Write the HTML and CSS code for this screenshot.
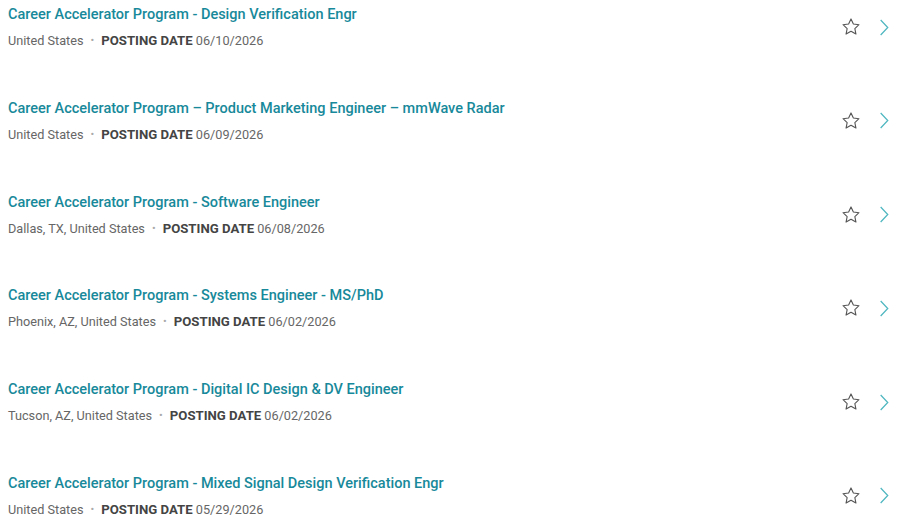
FILE: index.html
```html
<!DOCTYPE html>
<html lang="en">
<head>
    <meta charset="UTF-8">
    <meta name="viewport" content="width=device-width, initial-scale=1.0">
    <title>Jobs</title>
    <link rel="stylesheet" href="styles.css">
</head>
<body>
    <ul class="job-list">
        <li class="job">
            <div class="job-info">
                <a class="job-title" href="#">Career Accelerator Program - Design Verification Engr</a>
                <div class="job-meta"><span class="location">United States</span><span class="dot">•</span><span class="label">POSTING DATE</span> 06/10/2026</div>
            </div>
            <div class="job-actions">
                <svg class="star" viewBox="0 0 24 24"><path d="M12 3.2l2.6 5.6 6.1.7-4.5 4.2 1.2 6-5.4-3-5.4 3 1.2-6-4.5-4.2 6.1-.7z"/></svg>
                <svg class="chevron" viewBox="0 0 12 20"><path d="M2 1l8.5 9L2 19"/></svg>
            </div>
        </li>
        <li class="job">
            <div class="job-info">
                <a class="job-title" href="#">Career Accelerator Program – Product Marketing Engineer – mmWave Radar</a>
                <div class="job-meta"><span class="location">United States</span><span class="dot">•</span><span class="label">POSTING DATE</span> 06/09/2026</div>
            </div>
            <div class="job-actions">
                <svg class="star" viewBox="0 0 24 24"><path d="M12 3.2l2.6 5.6 6.1.7-4.5 4.2 1.2 6-5.4-3-5.4 3 1.2-6-4.5-4.2 6.1-.7z"/></svg>
                <svg class="chevron" viewBox="0 0 12 20"><path d="M2 1l8.5 9L2 19"/></svg>
            </div>
        </li>
        <li class="job">
            <div class="job-info">
                <a class="job-title" href="#">Career Accelerator Program - Software Engineer</a>
                <div class="job-meta"><span class="location">Dallas, TX, United States</span><span class="dot">•</span><span class="label">POSTING DATE</span> 06/08/2026</div>
            </div>
            <div class="job-actions">
                <svg class="star" viewBox="0 0 24 24"><path d="M12 3.2l2.6 5.6 6.1.7-4.5 4.2 1.2 6-5.4-3-5.4 3 1.2-6-4.5-4.2 6.1-.7z"/></svg>
                <svg class="chevron" viewBox="0 0 12 20"><path d="M2 1l8.5 9L2 19"/></svg>
            </div>
        </li>
        <li class="job">
            <div class="job-info">
                <a class="job-title" href="#">Career Accelerator Program - Systems Engineer - MS/PhD</a>
                <div class="job-meta"><span class="location">Phoenix, AZ, United States</span><span class="dot">•</span><span class="label">POSTING DATE</span> 06/02/2026</div>
            </div>
            <div class="job-actions">
                <svg class="star" viewBox="0 0 24 24"><path d="M12 3.2l2.6 5.6 6.1.7-4.5 4.2 1.2 6-5.4-3-5.4 3 1.2-6-4.5-4.2 6.1-.7z"/></svg>
                <svg class="chevron" viewBox="0 0 12 20"><path d="M2 1l8.5 9L2 19"/></svg>
            </div>
        </li>
        <li class="job">
            <div class="job-info">
                <a class="job-title" href="#">Career Accelerator Program - Digital IC Design &amp; DV Engineer</a>
                <div class="job-meta"><span class="location">Tucson, AZ, United States</span><span class="dot">•</span><span class="label">POSTING DATE</span> 06/02/2026</div>
            </div>
            <div class="job-actions">
                <svg class="star" viewBox="0 0 24 24"><path d="M12 3.2l2.6 5.6 6.1.7-4.5 4.2 1.2 6-5.4-3-5.4 3 1.2-6-4.5-4.2 6.1-.7z"/></svg>
                <svg class="chevron" viewBox="0 0 12 20"><path d="M2 1l8.5 9L2 19"/></svg>
            </div>
        </li>
        <li class="job">
            <div class="job-info">
                <a class="job-title" href="#">Career Accelerator Program - Mixed Signal Design Verification Engr</a>
                <div class="job-meta"><span class="location">United States</span><span class="dot">•</span><span class="label">POSTING DATE</span> 05/29/2026</div>
            </div>
            <div class="job-actions">
                <svg class="star" viewBox="0 0 24 24"><path d="M12 3.2l2.6 5.6 6.1.7-4.5 4.2 1.2 6-5.4-3-5.4 3 1.2-6-4.5-4.2 6.1-.7z"/></svg>
                <svg class="chevron" viewBox="0 0 12 20"><path d="M2 1l8.5 9L2 19"/></svg>
            </div>
        </li>
    </ul>
</body>
</html>
```

FILE: styles.css
```css
body {
    font-family: Roboto, "Liberation Sans", sans-serif;
    background-color: #fff;
    margin: 0;
    padding: 0;
}

.job-list {
    list-style: none;
    margin: 0;
    padding: 0 0 0 8px;
}

.job {
    display: flex;
    align-items: center;
    box-sizing: border-box;
    height: 93.8px;
    padding: 6px 0 45.8px;
}

.job:last-child {
    height: auto;
    padding-bottom: 4px;
}

.job-info {
    flex: 1;
    display: flex;
    flex-direction: column;
    gap: 10px;
}

.job-title {
    color: #17899a;
    font-size: 14.5px;
    font-weight: 500;
    line-height: 17px;
    text-decoration: none;
}

.job-meta {
    color: #666;
    font-size: 12.7px;
    line-height: 15px;
}

.dot {
    color: #aaa;
    font-size: 11px;
    margin: 0 7px 0 7px;
    vertical-align: 1px;
}

.label {
    color: #444;
    font-size: 13.2px;
    font-weight: 700;
}

.job-actions {
    display: flex;
    align-items: center;
    gap: 17px;
    padding-right: 11px;
}

.star {
    width: 22px;
    height: 22px;
    fill: none;
    stroke: #555;
    stroke-width: 1.2;
    stroke-linejoin: round;
}

.chevron {
    width: 10px;
    height: 19px;
    fill: none;
    stroke: #4fb7c0;
    stroke-width: 1.5;
}
```
